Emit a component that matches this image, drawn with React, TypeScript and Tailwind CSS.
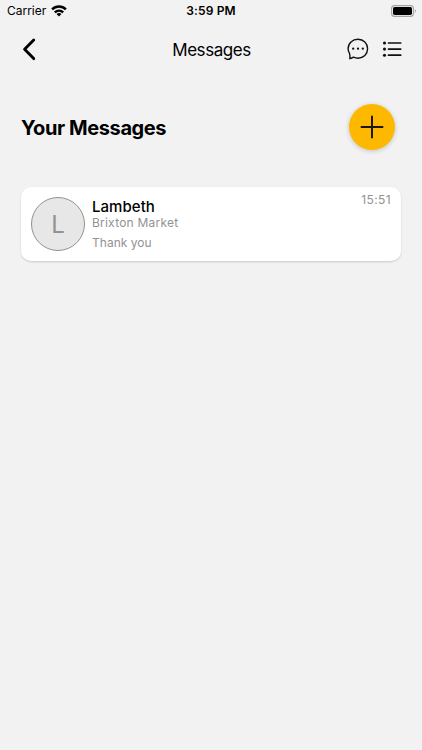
function WifiIcon() {
  return (
    <svg width="16" height="12" viewBox="0 0 16 12" fill="none" stroke="#000" strokeWidth="2.4">
      <path d="M1.1 4.3C4.9.5 11.1.5 14.9 4.3" />
      <path d="M3.8 7.3c2.4-2.2 6-2.2 8.4 0" />
      <path d="M8 11.5 5.5 9c1.4-1.3 3.6-1.3 5 0Z" fill="#000" stroke="none" />
    </svg>
  );
}

function BatteryIcon() {
  return (
    <svg width="26" height="12" viewBox="0 0 26 12" fill="none">
      <rect x=".6" y=".6" width="21.8" height="10.8" rx="3" stroke="#a2a2a2" strokeWidth="1.1" />
      <rect x="2" y="2" width="19" height="8" rx="1.7" fill="#000" />
      <path d="M23.8 4.2c1.5.5 1.5 3.1 0 3.6Z" fill="#a2a2a2" />
    </svg>
  );
}

function StatusBar() {
  return (
    <div className="grid h-[22px] grid-cols-3 items-center pl-[7px] pr-[7px]">
      <div className="flex items-center gap-[5px]">
        <span className="text-[12px] leading-[22px] tracking-[-0.02px]">Carrier</span>
        <WifiIcon />
      </div>
      <span className="text-center text-[12px] font-semibold leading-[22px] tracking-[0.15px]">3:59 PM</span>
      <div className="-mr-[2px] flex justify-end">
        <BatteryIcon />
      </div>
    </div>
  );
}

function Header() {
  return (
    <header className="grid h-[54px] grid-cols-3 items-center pl-[21px] pr-[20px]">
      <button aria-label="Back" className="w-fit">
        <svg width="16" height="24" viewBox="0 0 16 24" fill="none" stroke="#000" strokeWidth="2.9" strokeLinecap="round" strokeLinejoin="round">
          <path d="M12.7 3 3.6 12.3l9.1 9.3" />
        </svg>
      </button>
      <h1 className="pt-px text-center text-[17px] leading-6 tracking-[-0.45px]">Messages</h1>
      <div className="flex items-center justify-end gap-[13px]">
        <svg width="22" height="22" viewBox="0 0 22 22" fill="none" stroke="#111" strokeWidth="1.4" strokeLinejoin="round">
          <path d="M2.5 15.4C1.5 13.9 1.1 12.4 1.1 10.8 1.1 5.3 5.5 1.3 11 1.3s9.6 4.1 9.6 9.5-4.1 9.4-9.6 9.4c-1.8 0-3.3-.5-4.6-1.1-1.4.8-2.1 1.3-3.6 1.5.3-1.6.3-3.3-.3-5.2Z" />
          <g fill="#111" stroke="none">
            <circle cx="6.2" cy="10.7" r="1.15" />
            <circle cx="11" cy="10.7" r="1.15" />
            <circle cx="15.8" cy="10.7" r="1.15" />
          </g>
        </svg>
        <svg width="20" height="18" viewBox="0 0 20 18" fill="none" stroke="#111" strokeWidth="1.7" strokeLinecap="round">
          <path d="M6.5 3h12.2M6.5 9.1h12.2M6.5 15.2h12.2" />
          <g fill="#111" stroke="none">
            <circle cx="2.5" cy="3" r="1.55" />
            <circle cx="2.5" cy="9.1" r="1.55" />
            <circle cx="2.5" cy="15.2" r="1.55" />
          </g>
        </svg>
      </div>
    </header>
  );
}

function MessageCard() {
  return (
    <article className="mt-[37px] flex h-[74px] rounded-[10px] bg-white px-[10px] pt-[10px] shadow-[0_1px_2px_rgba(0,0,0,0.17)]">
      <div className="flex size-[54px] shrink-0 items-center justify-center rounded-full border border-[#929292] bg-[#e7e7e7] pt-px text-[24px] leading-none text-[#929292]">
        L
      </div>
      <div className="ml-[7px] flex-1">
        <h3 className="text-[15px] font-medium leading-[19px] tracking-[0.05px] text-black">Lambeth</h3>
        <p className="-mt-px text-[12px] leading-[15px] tracking-[0.22px] text-[#929292]">Brixton Market</p>
        <p className="mt-[5px] text-[12px] leading-[15px] tracking-[0.03px] text-[#929292]">Thank you</p>
      </div>
      <time className="-mt-[5px] text-[12px] leading-4 tracking-[0.4px] text-[#929292]">15:51</time>
    </article>
  );
}

export default function App() {
  return (
    <div className="min-h-[750px] w-full bg-[#f2f2f2] font-[Inter,sans-serif] text-black">
      <StatusBar />
      <Header />
      <main className="px-[21px] pt-7">
        <div className="flex h-[46px] items-center justify-between pr-[6px]">
          <h2 className="pt-px text-[20px] font-bold leading-6 tracking-[-0.4px]">Your Messages</h2>
          <button aria-label="New message" className="flex size-[46px] items-center justify-center rounded-full bg-[#ffb800] shadow-[0_1px_5px_rgba(0,0,0,0.2)]">
            <svg width="24" height="24" viewBox="0 0 24 24" stroke="#1b1606" strokeWidth="2" strokeLinecap="round">
              <path d="M12 1.6v21M1.5 12.1h21" />
            </svg>
          </button>
        </div>
        <MessageCard />
      </main>
    </div>
  );
}
